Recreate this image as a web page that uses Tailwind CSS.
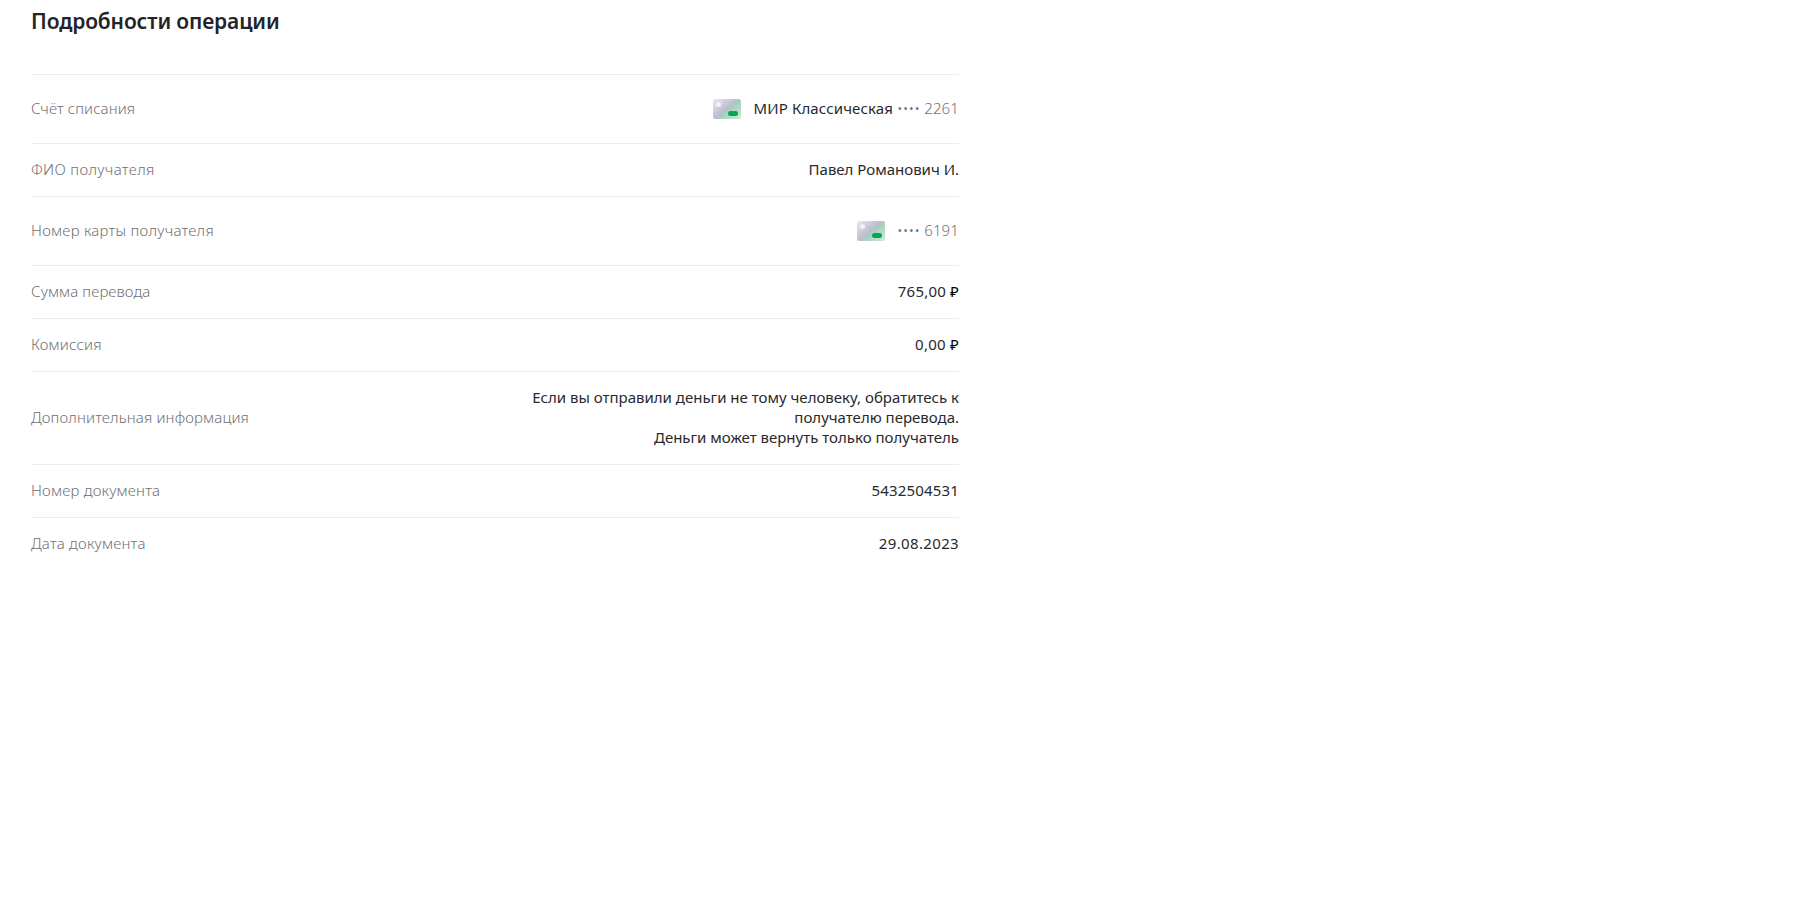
<!DOCTYPE html>
<html lang="ru">

<head>
    <meta charset="UTF-8">
    <meta name="viewport" content="width=device-width, initial-scale=1.0">
    <title>Подробности операции</title>
    <script src="https://cdn.jsdelivr.net/npm/@tailwindcss/browser@4"></script>
</head>

<body class="bg-white text-[#29292c] font-['Noto_Sans',sans-serif] text-[15px] leading-5 min-h-screen">
    <main class="ml-[31px] w-[928px] pt-[7px]">
        <h1 class="text-[21px] leading-7 font-semibold text-[#242427] tracking-[-0.13px] mb-[39px]">Подробности операции</h1>
        <dl class="divide-y divide-[#ededed] border-t border-[#ededed]">
            <!-- Карта списания -->
            <div class="flex items-center justify-between h-[69px]">
                <dt class="text-[#6f6f72] font-light pb-0.5 tracking-[0.1px]">Счёт списания</dt>
                <dd class="flex items-center">
                    <svg class="w-7 h-5 mr-[13px]" viewBox="0 0 28 20">
                        <defs>
                            <linearGradient id="card" gradientUnits="userSpaceOnUse" x1="3" y1="0" x2="23" y2="23">
                                <stop offset="0" stop-color="#e6e3ef" />
                                <stop offset=".42" stop-color="#c1bfd1" />
                                <stop offset=".52" stop-color="#a6cbbf" />
                                <stop offset="1" stop-color="#c9ebd6" />
                            </linearGradient>
                        </defs>
                        <rect width="28" height="20" rx="2" fill="url(#card)" />
                        <circle cx="5.5" cy="5.5" r="2.5" fill="#f3f1f8" />
                        <rect x="15" y="12" width="10" height="5" rx="2.5" fill="#0aa551" />
                    </svg>
                    <span class="pb-0.5 tracking-[0.12px]">МИР Классическая</span>
                    <span class="text-[#6f6f72] font-light ml-1 pb-0.5 tracking-[0.14px]">•••• 2261</span>
                </dd>
            </div>
            <div class="flex items-center justify-between h-[53px]">
                <dt class="text-[#6f6f72] font-light pb-0.5 tracking-[0.35px]">ФИО получателя</dt>
                <dd class="pb-0.5">Павел Романович И.</dd>
            </div>
            <div class="flex items-center justify-between h-[69px]">
                <dt class="text-[#6f6f72] font-light pb-0.5 tracking-[0.25px]">Номер карты получателя</dt>
                <dd class="flex items-center">
                    <svg class="w-7 h-5 mr-3" viewBox="0 0 28 20">
                        <rect width="28" height="20" rx="2" fill="url(#card)" />
                        <circle cx="5.5" cy="5.5" r="2.5" fill="#f3f1f8" />
                        <rect x="15" y="12" width="10" height="5" rx="2.5" fill="#0aa551" />
                    </svg>
                    <span class="text-[#6f6f72] font-light pb-0.5 tracking-[0.14px]">•••• 6191</span>
                </dd>
            </div>
            <div class="flex items-center justify-between h-[53px]">
                <dt class="text-[#6f6f72] font-light pb-0.5 tracking-[0.1px]">Сумма перевода</dt>
                <dd class="pb-0.5 tracking-[0.2px]">765,00 <span class="text-black">₽</span></dd>
            </div>
            <div class="flex items-center justify-between h-[53px]">
                <dt class="text-[#6f6f72] font-light pb-0.5 tracking-[0.2px]">Комиссия</dt>
                <dd class="pb-0.5 tracking-[0.25px]">0,00 <span class="text-black">₽</span></dd>
            </div>
            <div class="flex items-center justify-between h-[93px]">
                <dt class="text-[#6f6f72] font-light pb-0.5 tracking-[0.15px]">Дополнительная информация</dt>
                <dd class="pb-0.5 text-right">
                    Если вы отправили деньги не тому человеку, обратитесь к<br>
                    получателю перевода.<br>
                    Деньги может вернуть только получатель
                </dd>
            </div>
            <div class="flex items-center justify-between h-[53px]">
                <dt class="text-[#6f6f72] font-light pb-0.5 tracking-[0.2px]">Номер документа</dt>
                <dd class="pb-0.5 tracking-[0.17px]">5432504531</dd>
            </div>
            <div class="flex items-center justify-between h-[52px]">
                <dt class="text-[#6f6f72] font-light pb-0.5 tracking-[0.2px]">Дата документа</dt>
                <dd class="pb-0.5 tracking-[0.35px]">29.08.2023</dd>
            </div>
        </dl>
    </main>
</body>

</html>
